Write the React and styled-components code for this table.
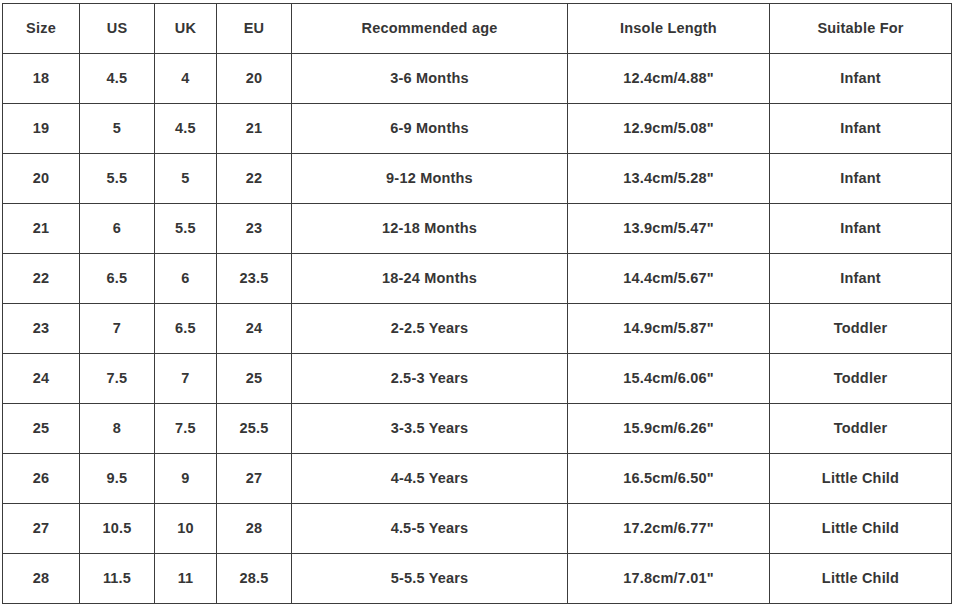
import React from 'react';
import styled, { createGlobalStyle } from 'styled-components';

const GlobalStyle = createGlobalStyle`
  html, body {
    margin: 0;
    padding: 0;
    background: #ffffff;
  }
  body {
    font-family: "Liberation Sans", Arial, sans-serif;
  }
`;

const columns = [
  { label: 'Size', width: 77 },
  { label: 'US', width: 75 },
  { label: 'UK', width: 62 },
  { label: 'EU', width: 75 },
  { label: 'Recommended age', width: 276 },
  { label: 'Insole Length', width: 202 },
  { label: 'Suitable For', width: 182 },
];

const rows = [
  ['18', '4.5', '4', '20', '3-6 Months', '12.4cm/4.88"', 'Infant'],
  ['19', '5', '4.5', '21', '6-9 Months', '12.9cm/5.08"', 'Infant'],
  ['20', '5.5', '5', '22', '9-12 Months', '13.4cm/5.28"', 'Infant'],
  ['21', '6', '5.5', '23', '12-18 Months', '13.9cm/5.47"', 'Infant'],
  ['22', '6.5', '6', '23.5', '18-24 Months', '14.4cm/5.67"', 'Infant'],
  ['23', '7', '6.5', '24', '2-2.5 Years', '14.9cm/5.87"', 'Toddler'],
  ['24', '7.5', '7', '25', '2.5-3 Years', '15.4cm/6.06"', 'Toddler'],
  ['25', '8', '7.5', '25.5', '3-3.5 Years', '15.9cm/6.26"', 'Toddler'],
  ['26', '9.5', '9', '27', '4-4.5 Years', '16.5cm/6.50"', 'Little Child'],
  ['27', '10.5', '10', '28', '4.5-5 Years', '17.2cm/6.77"', 'Little Child'],
  ['28', '11.5', '11', '28.5', '5-5.5 Years', '17.8cm/7.01"', 'Little Child'],
];

const App = () => {
  return (
    <>
      <GlobalStyle />
      <Wrap>
        <Table>
          <colgroup>
            {columns.map((c) => (
              <col key={c.label} style={{ width: c.width }} />
            ))}
          </colgroup>
          <thead>
            <tr>
              {columns.map((c) => (
                <Head key={c.label}>{c.label}</Head>
              ))}
            </tr>
          </thead>
          <tbody>
            {rows.map((r) => (
              <tr key={r[0]}>
                {r.map((v, i) => (
                  <Cell key={i}>{v}</Cell>
                ))}
              </tr>
            ))}
          </tbody>
        </Table>
      </Wrap>
    </>
  );
};

const Wrap = styled.div`
  padding: 3px 0 0 2px;
`;

const Table = styled.table`
  border-collapse: collapse;
  table-layout: fixed;
  width: 949px;
`;

const Head = styled.th`
  height: 47px;
  padding: 0 0 2px;
  border: 1.5px solid #3c3c3c;
  font-size: 14.5px;
  font-weight: bold;
  letter-spacing: 0.2px;
  color: #363636;
  text-align: center;
  vertical-align: middle;
`;

const Cell = styled.td`
  height: 47px;
  padding: 0 0 2px;
  border: 1.5px solid #3c3c3c;
  font-size: 14.5px;
  font-weight: bold;
  letter-spacing: 0.2px;
  color: #363636;
  text-align: center;
  vertical-align: middle;
`;

export default App;
